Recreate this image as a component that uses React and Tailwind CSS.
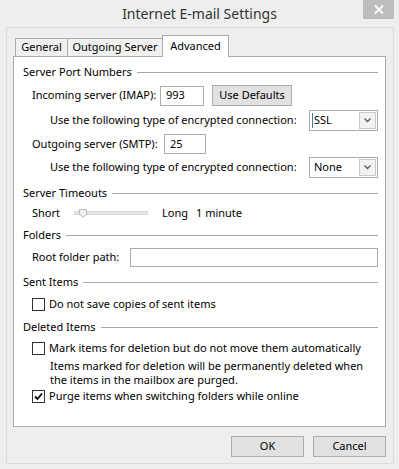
const font = { fontFamily: "'Noto Sans', 'Open Sans', sans-serif" };

const GroupHeading = ({ title, className = '' }) => (
  <div className={`flex items-center h-[18px] pl-[9px] pr-[7px] ${className}`}>
    <span className="whitespace-nowrap">{title}</span>
    <div className="flex-1 h-px bg-[#a9a9a9] ml-[5px]" />
  </div>
);

const Select = ({ value, caret }) => (
  <div className="w-[69px] h-[21px] border border-[#ababab] bg-white flex items-center">
    <div className="flex-1 flex items-center pl-[2px]">
      {caret && <div className="w-px h-[15px] bg-[#3c7fb1] mr-[1px]" />}
      <span className={caret ? '' : 'pl-[2px]'}>{value}</span>
    </div>
    <div className="w-[17px] h-[17px] mr-[1px] border border-[#c9c9c9] bg-[#f2f2f2] flex items-center justify-center">
      <svg width="7" height="5" viewBox="0 0 7 5">
        <path d="M0.5 0.5 L3.5 3.5 L6.5 0.5" fill="none" stroke="#606060" strokeWidth="1.4" />
      </svg>
    </div>
  </div>
);

const Checkbox = ({ checked }) => (
  <div className="w-[13px] h-[13px] border border-[#333333] bg-white flex items-center justify-center shrink-0">
    {checked && (
      <svg width="9" height="9" viewBox="0 0 9 9">
        <path d="M1 4.5 L3.5 7 L8 1.5" fill="none" stroke="#000" strokeWidth="1.8" />
      </svg>
    )}
  </div>
);

export default function App() {
  return (
    <div className="w-[399px] h-[469px] bg-[#eeeeee] text-[11px] text-black relative overflow-hidden" style={font}>
      {/* Title bar */}
      <div className="h-[27px] flex items-center justify-center">
        <span className="text-[14px] text-[#333333]">Internet E-mail Settings</span>
      </div>
      <div className="absolute top-0 right-[5px] w-[31px] h-[19px] bg-[#bdbdbd] flex items-center justify-center">
        <svg width="10" height="9" viewBox="0 0 10 9">
          <path d="M1 0.5 L9 8.5 M9 0.5 L1 8.5" stroke="#fff" strokeWidth="2" />
        </svg>
      </div>

      {/* Window frame */}
      <div className="ml-[6px] w-[388px] h-[437px] border border-[#dadada] flex flex-col">
        <div className="ml-[6px] mt-[7px] w-[373px]">
          {/* Tabs */}
          <div className="flex items-end h-[21px] pl-[2px]">
            <div className="w-[53px] h-[18px] border border-b-0 border-[#acacac] bg-[#f0f0f0] flex items-center justify-center whitespace-nowrap">General</div>
            <div className="-ml-px w-[96px] h-[18px] border border-b-0 border-[#acacac] bg-[#f0f0f0] flex items-center justify-center whitespace-nowrap">Outgoing Server</div>
            <div className="-ml-px w-[67px] h-[22px] -mb-px relative z-10 border border-b-0 border-[#acacac] bg-white flex items-start justify-center pt-[2px] whitespace-nowrap">Advanced</div>
          </div>

          {/* Panel */}
          <div className="h-[371px] border border-[#acacac] bg-white flex flex-col whitespace-nowrap">
            <GroupHeading title="Server Port Numbers" className="mt-[6px]" />

            <div className="flex items-center h-[21px] mt-[4px] pl-[18px]">
              <span className="w-[128px]">Incoming server (IMAP):</span>
              <div className="w-[44px] h-[20px] border border-[#ababab] flex items-center pl-[5px]">993</div>
              <button className="ml-[8px] w-[80px] h-[21px] border border-[#adadad] bg-[#e1e1e1] flex items-center justify-center">Use Defaults</button>
            </div>

            <div className="flex items-center justify-between h-[21px] mt-[4px] pl-[36px] pr-[7px]">
              <span>Use the following type of encrypted connection:</span>
              <Select value="SSL" caret />
            </div>

            <div className="flex items-center h-[20px] mt-[3px] pl-[18px]">
              <span className="w-[132px]">Outgoing server (SMTP):</span>
              <div className="w-[42px] h-[20px] border border-[#ababab] flex items-center pl-[5px]">25</div>
            </div>

            <div className="flex items-center justify-between h-[21px] mt-[3px] pl-[36px] pr-[7px]">
              <span>Use the following type of encrypted connection:</span>
              <Select value="None" />
            </div>

            <GroupHeading title="Server Timeouts" className="mt-[6px]" />

            <div className="flex items-center h-[18px] mt-[2px] pl-[18px]">
              <span className="w-[42px]">Short</span>
              <div className="relative w-[74px] h-[4px] border border-[#d6d6d6] bg-[#e7e7e7]">
                <svg className="absolute left-[4px] -top-[3px]" width="8" height="9" viewBox="0 0 8 9">
                  <path d="M0.5 0.5 H7.5 V5 L4 8.5 L0.5 5 Z" fill="#f2f2f2" stroke="#b8b8b8" />
                </svg>
              </div>
              <span className="ml-[14px]">Long</span>
              <span className="ml-[8px]">1 minute</span>
            </div>

            <GroupHeading title="Folders" className="mt-[4px]" />

            <div className="flex items-center h-[19px] mt-[4px] pl-[18px] pr-[7px]">
              <span className="w-[98px]">Root folder path:</span>
              <div className="flex-1 h-[19px] border border-[#ababab]" />
            </div>

            <GroupHeading title="Sent Items" className="mt-[6px]" />

            <div className="flex items-center h-[18px] mt-[4px] pl-[18px]">
              <Checkbox />
              <span className="ml-[4px]">Do not save copies of sent items</span>
            </div>

            <GroupHeading title="Deleted Items" className="mt-[5px]" />

            <div className="flex items-center h-[18px] mt-[3px] pl-[18px]">
              <Checkbox />
              <span className="ml-[4px]">Mark items for deletion but do not move them automatically</span>
            </div>

            <div className="mt-[2px] pl-[36px] leading-[14px]">
              <div>Items marked for deletion will be permanently deleted when</div>
              <div>the items in the mailbox are purged.</div>
            </div>

            <div className="flex items-center h-[18px] pl-[18px]">
              <Checkbox checked />
              <span className="ml-[4px]">Purge items when switching folders while online</span>
            </div>
          </div>

          {/* Dialog buttons */}
          <div className="flex justify-end gap-[9px] mt-[9px]">
            <button className="w-[73px] h-[21px] border border-[#adadad] bg-[#e1e1e1] flex items-center justify-center">OK</button>
            <button className="w-[73px] h-[21px] border border-[#adadad] bg-[#e1e1e1] flex items-center justify-center">Cancel</button>
          </div>
        </div>
      </div>
    </div>
  );
}
